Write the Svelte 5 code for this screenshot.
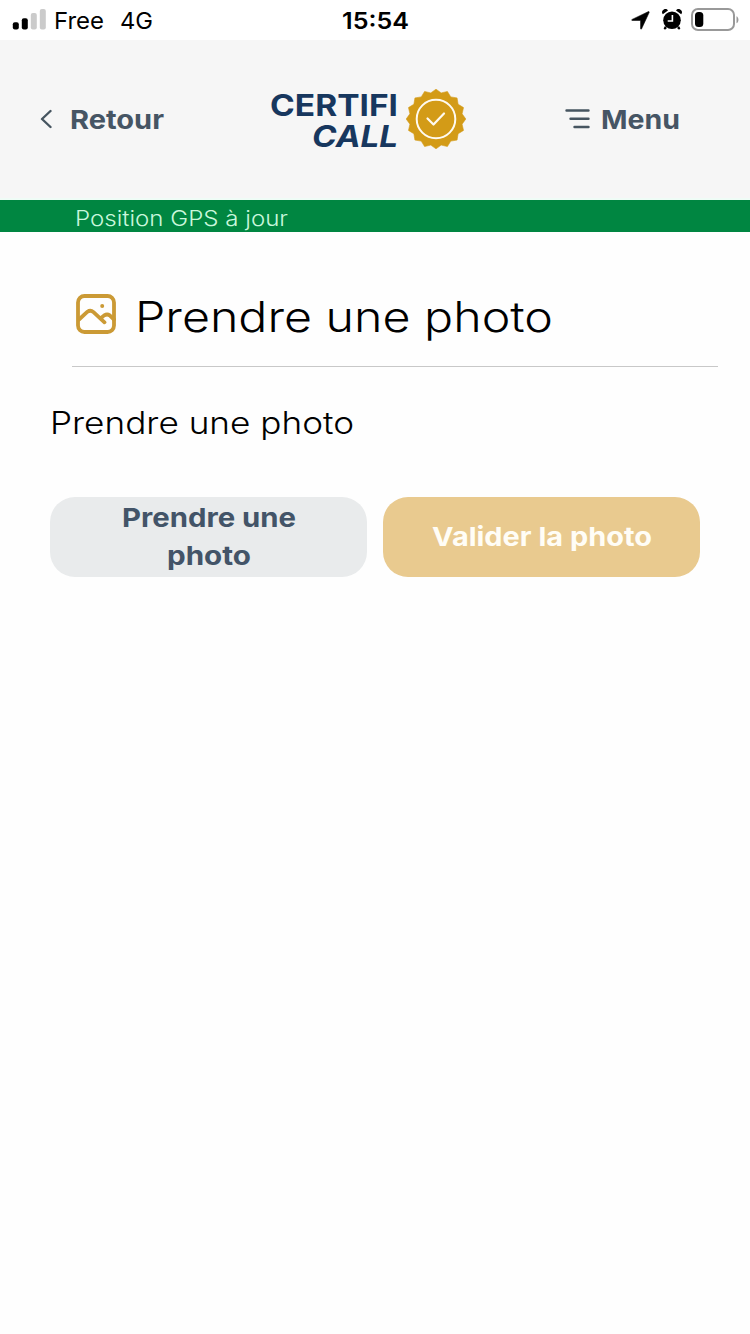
<script>
  // Star-shaped outline of the certification seal
  const points = 16;
  const seal = Array.from({ length: points * 2 }, (_, i) => {
    const r = i % 2 ? 26.6 : 29.8;
    const a = (Math.PI * i) / points - Math.PI / 2;
    return `${(30 + r * Math.cos(a)).toFixed(2)},${(30 + r * Math.sin(a)).toFixed(2)}`;
  }).join(' ');
</script>

{#snippet label(text, width, size, kind)}
  <svg class="label {kind}" width={width} height={size} role="img" aria-label={text}>
    <text x="0" y={size * 0.8} font-size={size} textLength={width} lengthAdjust="spacingAndGlyphs">{text}</text>
  </svg>
{/snippet}

<div class="screen">
  <div class="status">
    <div class="network">
      <svg width="34" height="22" viewBox="0 0 34 22">
        <rect x="0.8" y="13.3" width="6" height="7.2" rx="2" fill="#000" />
        <rect x="9.8" y="9.3" width="6" height="11.2" rx="2" fill="#000" />
        <rect x="18.8" y="4" width="6" height="16.5" rx="2" fill="#cbcbcb" />
        <rect x="27.800" y="0" width="6" height="20.5" rx="2" fill="#cbcbcb" />
      </svg>
      <span class="carrier">{@render label('Free', 50, 23.5, 'regular')}</span>
      <span class="mobile">{@render label('4G', 33, 23.5, 'regular')}</span>
    </div>
    <div class="clock">{@render label('15:54', 67, 23, 'semi')}</div>
    <div class="indicators">
      <svg width="19" height="19" viewBox="0 0 19 19"><path d="M17.2 .7c.8-.3 1.2.1.9.9l-7.5 16.1c-.4.8-1 .6-1-.2V9.4H1.4c-.9 0-1-.7-.2-1z" fill="#000" stroke="#000" stroke-width=".6" /></svg>
      <svg class="alarm" width="20" height="22" viewBox="0 0 20 22">
        <circle cx="10" cy="11.2" r="8.8" />
        <path d="M.8 5.2A3.2 3.2 0 0 1 6 1.4zM19.2 5.2A3.2 3.2 0 0 0 14 1.4zM3 17l2 2-2 1.8-1.4-1.4zM17 17l-2 2 2 1.8 1.4-1.4z" />
        <path d="M10.4 6v6H5.7" fill="none" stroke="#fff" stroke-width="1.6" />
      </svg>
      <svg width="49" height="24" viewBox="0 0 49 24">
        <rect x="1" y="1" width="42" height="21" rx="6" fill="none" stroke="#999" stroke-width="2" />
        <rect x="4" y="4" width="8.3" height="15" rx="3.5" fill="#000" />
        <path d="M45.5 8.300c2.600 1 2.600 6 0 7z" fill="#999" />
      </svg>
    </div>
  </div>

  <header>
    <div class="back">
      <svg width="12" height="20" viewBox="0 0 12 20"><path d="M10.500 2 2 10l8.500 8" fill="none" stroke="#465560" stroke-width="2.4" stroke-linecap="round" stroke-linejoin="round" /></svg>
      {@render label('Retour', 94, 26, 'bold')}
    </div>
    <div class="brand">
      <div class="wordmark">
        {@render label('CERTIFI', 128, 29.5, 'logo')}
        {@render label('CALL', 86, 29.5, 'logo slanted')}
      </div>
      <svg width="60" height="60" viewBox="0 0 60 60">
        <polygon points={seal} fill="#d39b17" stroke="#d39b17" stroke-width=".6" stroke-linejoin="round" />
        <circle cx="30" cy="30" r="19.300" fill="none" stroke="#fffaf0" stroke-width="2" />
        <path d="m21.500 29.500 6 6L38 24.500" fill="none" stroke="#fffaf0" stroke-width="2.200" stroke-linecap="round" stroke-linejoin="round" />
      </svg>
    </div>
    <div class="menu">
      <svg width="25" height="20" viewBox="0 0 25 20"><path d="M1.500 1.500h22M5.500 9.800h18M9.500 18h14" fill="none" stroke="#465560" stroke-width="2.400" stroke-linecap="round" /></svg>
      {@render label('Menu', 79, 26, 'bold')}
    </div>
  </header>

  <div class="gps">{@render label('Position GPS à jour', 213, 21, 'light')}</div>

  <main>
    <h1>
      <svg width="40" height="40" viewBox="0 0 40 40" fill="none" stroke="#cb9a35" stroke-width="3.8" stroke-linejoin="round" stroke-linecap="round">
        <rect x="2" y="2" width="36" height="36" rx="6.5" />
        <path d="m3 25.500 8.500-7.800q3-2.200 6 .4L28.500 28.300M25 24l3.200-2.600q3-1.800 5.500 0L38 25.500" />
        <circle cx="26.200" cy="12" r="2" fill="#cb9a35" stroke="none" />
      </svg>
      {@render label('Prendre une photo', 418, 42.5, 'light')}
    </h1>
    <p>{@render label('Prendre une photo', 304, 31, 'light')}</p>
    <div class="actions">
      <button class="take">
        {@render label('Prendre une', 174, 26, 'bold')}
        {@render label('photo', 84, 26, 'bold')}
      </button>
      <button class="confirm">{@render label('Valider la photo', 220, 26, 'bold')}</button>
    </div>
  </main>
</div>

<style>
  :global(body) { background: #fff; }
  .screen { width: 750px; height: 1334px; background: #fefefe; overflow: hidden; font-family: Inter, "Liberation Sans", sans-serif; }
  svg { display: block; flex: none; }
  .label { overflow: visible; fill: currentColor; }
  .regular { font-weight: 400; }
  .semi { font-weight: 600; }
  .bold { font-weight: 700; }
  .light { font-weight: 360; }
  .logo { font-weight: 700; }
  .slanted { font-style: italic; }
  .status { height: 40px; display: grid; grid-template-columns: 1fr 67px 1fr; background: #fff; color: #000; }
  .network { display: flex; padding: 9px 0 0 12px; }
  .carrier { margin: 1px 0 0 8px; }
  .mobile { margin: 1px 0 0 16px; }
  .clock { padding-top: 10.5px; }
  .indicators { display: flex; justify-content: flex-end; padding: 8px 10px 0 0; }
  .indicators svg:first-child { margin-top: 3px; }
  .alarm { margin: 1px 9px 0 12px; }
  header { height: 158px; display: flex; background: #f6f6f6; color: #465564; border-bottom: 2px solid #effcf6; }
  .back { width: 229px; padding: 69px 0 0 40px; box-sizing: border-box; display: flex; gap: 18px; margin-right: 40px; }
  .back .label, .menu .label { margin-top: -1px; }
  .brand { width: 197px; display: flex; gap: 8px; padding-top: 49px; color: #17375e; }
  .wordmark { width: 129px; display: flex; flex-direction: column; gap: 0.8px; align-items: flex-end; padding-top: 3.3px; }
  .menu { display: flex; gap: 11px; padding: 69px 0 0 99px; }
  .gps { height: 32px; background: #008641; color: #c9f7dc; padding: 9px 0 0 75px; box-sizing: border-box; }
  main { color: #000; }
  h1 { margin: 0 32px 0 72px; padding: 62px 0 0 4px; height: 72px; border-bottom: 1px solid #c8c8c8; display: flex; gap: 19px; }
  h1 .label { margin-top: 4px; }
  p { margin: 0; height: 130px; padding: 41.5px 0 0 50px; box-sizing: border-box; }
  .actions { display: grid; grid-template-columns: 1fr 1fr; gap: 16px; padding: 0 50px; }
  button { height: 80px; border: 0; border-radius: 25px; font-family: inherit; padding: 2.5px 0 0; display: flex; flex-direction: column; align-items: center; justify-content: center; gap: 12px; }
  .take { background: #e9ebec; color: #435468; }
  .confirm { background: #e9ca8f; color: #fffdf6; }
</style>
